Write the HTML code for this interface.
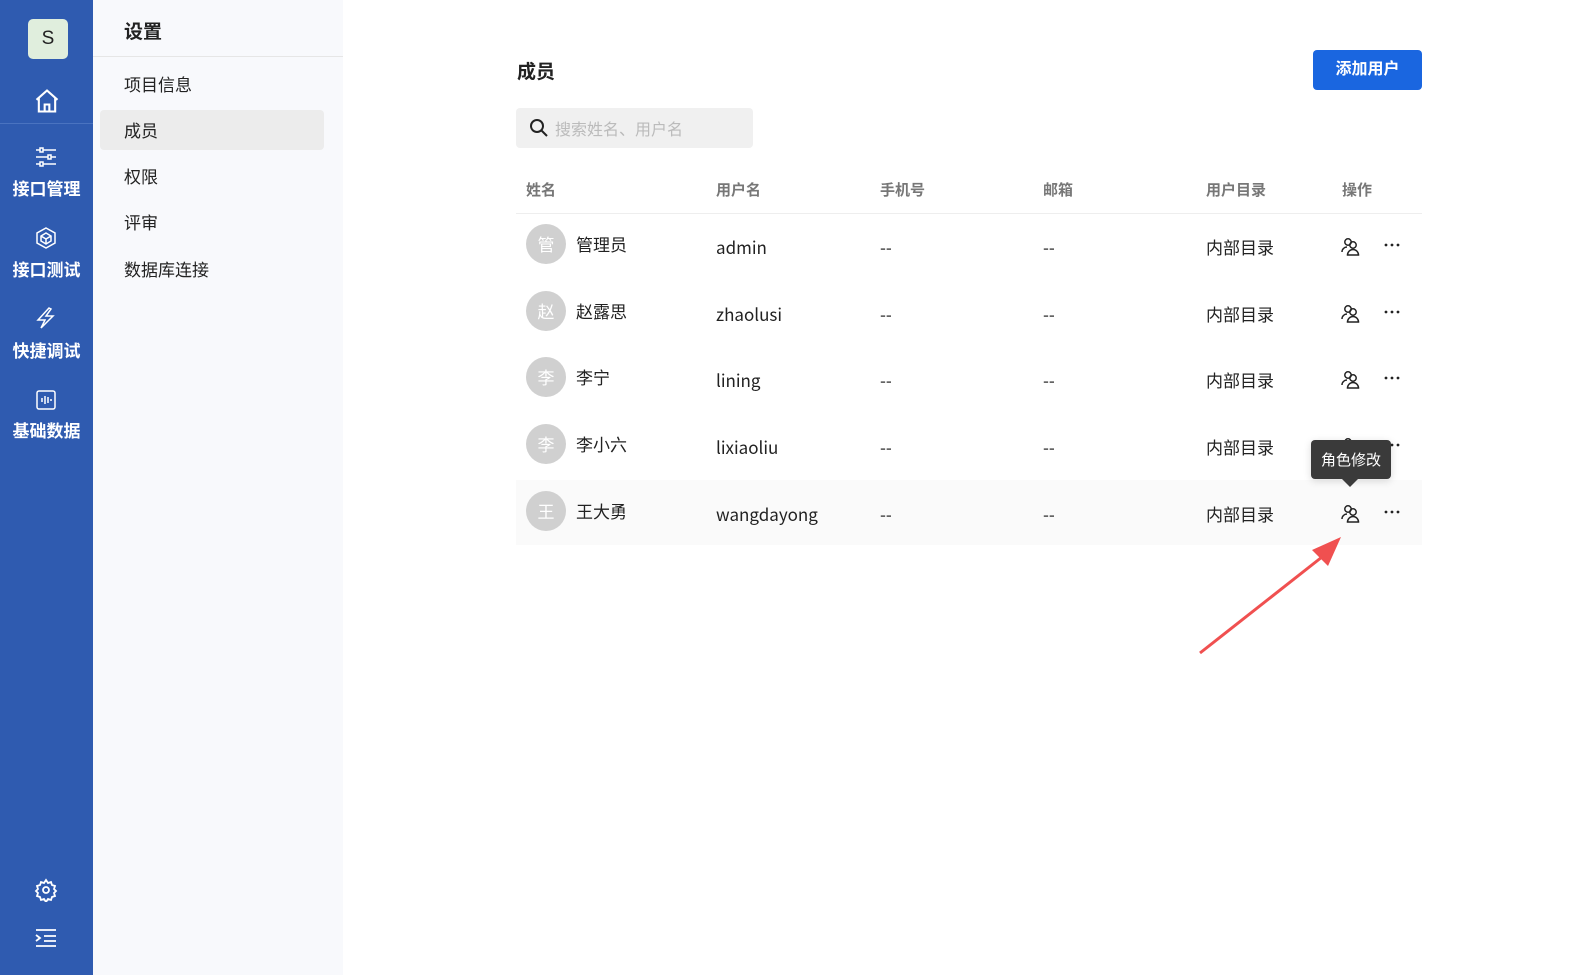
<!DOCTYPE html><html><head><meta charset="utf-8"><style>
*{box-sizing:border-box;margin:0;padding:0}
body{width:1595px;height:975px;position:relative;background:#fff;font-family:"Liberation Sans","Noto Sans CJK SC",sans-serif;color:#222;overflow:hidden}
.a{position:absolute}
.nav{left:0;top:0;width:93px;height:975px;background:#2f5bb0;color:#fff}
.nl{position:absolute;left:0;width:93px;text-align:center;font-size:17px;font-weight:bold}
.sub{left:93px;top:0;width:250px;height:975px;background:#f8f9fc}
.mi{position:absolute;left:31px;font-size:17px;color:#222;font-family:"Noto Sans CJK SC",sans-serif;line-height:22px}
.th{position:absolute;top:180px;font-size:15px;color:#777;font-weight:bold;font-family:"Noto Sans CJK SC",sans-serif;line-height:20px}
.td{position:absolute;font-size:17px;color:#222;font-family:"Noto Sans CJK SC",sans-serif;line-height:22px}
.av{position:absolute;left:526px;width:40px;height:40px;border-radius:50%;background:#d0d0d0;color:#fff;font-size:17px;text-align:center;line-height:40px;font-family:"Noto Sans CJK SC",sans-serif}
</style></head><body>
<div class="a nav">
<div class="a" style="left:28px;top:19px;width:40px;height:40px;background:#e0eedd;border-radius:5px;color:#222;font-size:19px;text-align:center;line-height:40px">S</div>
<svg class="a" style="left:33px;top:87px" width="28" height="28" viewBox="0 0 24 24" fill="none" stroke="#fff" stroke-width="1.8"><path d="M3 11L12 3l9 8M5 9.5V21h14V9.5M10 21v-6h4v6"/></svg>
<div class="a" style="left:0;top:123px;width:93px;height:1px;background:#4a73c0"></div>
<svg class="a" style="left:35px;top:146px" width="22" height="22" viewBox="0 0 22 22" fill="none" stroke="#fff" stroke-width="1.5"><path d="M1 4h20M1 11h20M1 18h20"/><rect x="5" y="2" width="3" height="4" fill="#2f5bb0"/><rect x="13" y="9" width="3" height="4" fill="#2f5bb0"/><rect x="5" y="16" width="3" height="4" fill="#2f5bb0"/></svg>
<div class="nl" style="top:175px">接口管理</div>
<svg class="a" style="left:35px;top:227px" width="22" height="22" viewBox="0 0 22 22" fill="none" stroke="#fff" stroke-width="1.5"><path d="M11 1l9 5v10l-9 5-9-5V6z"/><path d="M11 6l5 3v5l-5 3-5-3V9z M6 9l5 3 5-3M11 12v5"/></svg>
<div class="nl" style="top:256px">接口测试</div>
<svg class="a" style="left:35px;top:307px" width="22" height="22" viewBox="0 0 22 22" fill="none" stroke="#fff" stroke-width="1.5"><path d="M14 1L3 13h7l-4 8 12-12h-7l5-7z"/></svg>
<div class="nl" style="top:337px">快捷调试</div>
<svg class="a" style="left:36px;top:390px" width="20" height="20" viewBox="0 0 20 20" fill="none" stroke="#fff" stroke-width="1.5"><rect x="1" y="1" width="18" height="18" rx="2"/><path d="M6 8v4M9 6v8M12 7v6M15 9v2"/></svg>
<div class="nl" style="top:417px">基础数据</div>
<svg class="a" style="left:34px;top:878px" width="24" height="24" viewBox="0 0 24 24" fill="none" stroke="#fff" stroke-width="1.8"><circle cx="12" cy="12" r="3"/><path d="M12 2l2 3 3-1 1 3 3 1-1 3 2 2-2 2 1 3-3 1-1 3-3-1-2 3-2-3-3 1-1-3-3-1 1-3-2-2 2-2-1-3 3-1 1-3 3 1z"/></svg>
<svg class="a" style="left:35px;top:928px" width="22" height="20" viewBox="0 0 22 20" fill="none" stroke="#fff" stroke-width="1.8"><path d="M1 2h20M9 8h12M9 13h12M1 18h20M1 7l4 3-4 3"/></svg>
</div>
<div class="a sub">
<div class="a" style="left:31px;top:17px;font-size:19px;font-weight:bold">设置</div>
<div class="a" style="left:0;top:56px;width:250px;height:1px;background:#e6e6e6"></div>
<div class="mi" style="top:73px">项目信息</div>
<div class="a" style="left:7px;top:110px;width:224px;height:40px;background:#ececec;border-radius:4px"></div>
<div class="mi" style="top:119px">成员</div>
<div class="mi" style="top:165px">权限</div>
<div class="mi" style="top:211px">评审</div>
<div class="mi" style="top:258px">数据库连接</div>
</div>
<div class="a" style="left:517px;top:57px;font-size:19px;font-weight:bold">成员</div>
<div class="a" style="left:1313px;top:50px;width:109px;height:40px;background:#1a66e0;border-radius:4px;color:#fff;font-size:16px;font-weight:bold;text-align:center;line-height:40px">添加用户</div>
<div class="a" style="left:516px;top:108px;width:237px;height:40px;background:#f0f0f0;border-radius:4px"></div>
<svg class="a" style="left:529px;top:118px" width="20" height="20" viewBox="0 0 20 20" fill="none" stroke="#222" stroke-width="2"><circle cx="8" cy="8" r="6"/><path d="M12.5 12.5L18 18"/></svg>
<div class="a" style="left:555px;top:118px;font-size:16px;color:#bbb;font-family:'Noto Sans CJK SC',sans-serif;line-height:20px">搜索姓名、用户名</div>
<div class="th" style="left:526px">姓名</div><div class="th" style="left:716px">用户名</div><div class="th" style="left:880px">手机号</div><div class="th" style="left:1043px">邮箱</div><div class="th" style="left:1206px">用户目录</div><div class="th" style="left:1342px">操作</div>
<div class="a" style="left:516px;top:213px;width:906px;height:1px;background:#eee"></div>
<div class="a" style="left:516px;top:480px;width:906px;height:65px;background:#fafafa"></div>
<svg width="0" height="0" style="position:absolute"><defs><g id="ic" fill="none" stroke="#222" stroke-width="1.5"><circle cx="7" cy="6" r="3.2"/><path d="M1 16c0-3 2.5-5 5-5"/><circle cx="12" cy="9" r="3.2"/><path d="M6.5 19c0-3 2.5-5.5 5.5-5.5s5.5 2.5 5.5 5.5z"/></g><g id="dt" fill="#222"><circle cx="3" cy="3" r="1.4"/><circle cx="9" cy="3" r="1.4"/><circle cx="15" cy="3" r="1.4"/></g></defs></svg>
<div class="av" style="top:224px">管</div><div class="td" style="left:576px;top:233px">管理员</div><div class="td" style="left:716px;top:236px">admin</div><div class="td" style="left:880px;top:236px">--</div><div class="td" style="left:1043px;top:236px">--</div><div class="td" style="left:1206px;top:236px">内部目录</div>
<svg class="a" style="left:1341px;top:236px" width="20" height="20"><use href="#ic"/></svg><svg class="a" style="left:1383px;top:242px" width="18" height="6"><use href="#dt"/></svg>
<div class="av" style="top:291px">赵</div><div class="td" style="left:576px;top:300px">赵露思</div><div class="td" style="left:716px;top:303px">zhaolusi</div><div class="td" style="left:880px;top:303px">--</div><div class="td" style="left:1043px;top:303px">--</div><div class="td" style="left:1206px;top:303px">内部目录</div>
<svg class="a" style="left:1341px;top:303px" width="20" height="20"><use href="#ic"/></svg><svg class="a" style="left:1383px;top:309px" width="18" height="6"><use href="#dt"/></svg>
<div class="av" style="top:357px">李</div><div class="td" style="left:576px;top:366px">李宁</div><div class="td" style="left:716px;top:369px">lining</div><div class="td" style="left:880px;top:369px">--</div><div class="td" style="left:1043px;top:369px">--</div><div class="td" style="left:1206px;top:369px">内部目录</div>
<svg class="a" style="left:1341px;top:369px" width="20" height="20"><use href="#ic"/></svg><svg class="a" style="left:1383px;top:375px" width="18" height="6"><use href="#dt"/></svg>
<div class="av" style="top:424px">李</div><div class="td" style="left:576px;top:433px">李小六</div><div class="td" style="left:716px;top:436px">lixiaoliu</div><div class="td" style="left:880px;top:436px">--</div><div class="td" style="left:1043px;top:436px">--</div><div class="td" style="left:1206px;top:436px">内部目录</div>
<svg class="a" style="left:1341px;top:436px" width="20" height="20"><use href="#ic"/></svg><svg class="a" style="left:1383px;top:442px" width="18" height="6"><use href="#dt"/></svg>
<div class="av" style="top:491px">王</div><div class="td" style="left:576px;top:500px">王大勇</div><div class="td" style="left:716px;top:503px">wangdayong</div><div class="td" style="left:880px;top:503px">--</div><div class="td" style="left:1043px;top:503px">--</div><div class="td" style="left:1206px;top:503px">内部目录</div>
<svg class="a" style="left:1341px;top:503px" width="20" height="20"><use href="#ic"/></svg><svg class="a" style="left:1383px;top:509px" width="18" height="6"><use href="#dt"/></svg>
<div class="a" style="left:1311px;top:440px;width:80px;height:39px;background:#3a3a3a;border-radius:4px;color:#fff;font-size:15px;text-align:center;line-height:39px;box-shadow:0 2px 8px rgba(0,0,0,.15);font-family:'Noto Sans CJK SC',sans-serif">角色修改</div>
<div class="a" style="left:1342px;top:479px;width:0;height:0;border-left:8px solid transparent;border-right:8px solid transparent;border-top:8px solid #3a3a3a"></div>
<svg class="a" style="left:0;top:0" width="1595" height="975"><path d="M1200 653L1322 557" stroke="#f05050" stroke-width="3"/><path d="M1341 537L1312 550L1328 566z" fill="#f05050"/></svg>
</body></html>
